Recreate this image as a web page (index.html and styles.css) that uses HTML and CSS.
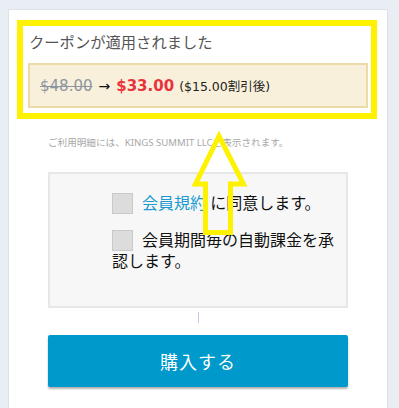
FILE: index.html
```html
<!DOCTYPE html>
<html lang="ja">
<head>
<meta charset="utf-8">
<link rel="stylesheet" href="styles.css">
</head>
<body>
<div class="card">
  <section class="coupon">
    <h2 class="coupon-title">クーポンが適用されました</h2>
    <div class="price-box">
      <span class="old">$48.00</span>
      <span class="arrow">→</span>
      <span class="new">$33.00</span>
      <span class="note">($15.00割引後)</span>
    </div>
  </section>
  <div class="content">
    <p class="statement">ご利用明細には、KINGS SUMMIT LLCと表示されます。</p>
    <div class="agree-box">
      <div class="agree-inner">
        <p class="agree-row"><span class="check"></span><a class="link">会員規約</a> に同意します。</p>
        <p class="agree-row"><span class="check"></span>会員期間毎の自動課金を承認します。</p>
      </div>
    </div>
    <div class="caret-row"><span class="caret"></span></div>
    <button class="buy">購入する</button>
  </div>
</div>
<svg class="annot-arrow" width="399" height="408" viewBox="0 0 399 408">
  <polygon points="219,136 195.5,184 205.5,184 205.5,232.5 230.5,232.5 230.5,184 243.5,184" fill="none" stroke="#fff200" stroke-width="5" stroke-linejoin="miter" stroke-miterlimit="10"/>
</svg>
</body>
</html>
```

FILE: styles.css
```css
html, body {
  margin: 0;
  padding: 0;
}
body {
  background: #e9edf4;
  padding: 9px 0 0 8px;
  height: 408px;
  box-sizing: border-box;
  overflow: hidden;
  font-family: "Noto Sans", "Noto Sans CJK JP", sans-serif;
  position: relative;
}
.card {
  width: 380px;
  height: 399px;
  box-sizing: border-box;
  background: #fff;
  border: 1px solid #dde1e8;
  border-bottom: none;
  padding: 10px 0 0 8px;
}
.coupon {
  width: 360px;
  box-sizing: border-box;
  border: 6px solid #fff200;
  padding: 6px 3px 5px 5px;
}
.coupon-title {
  margin: 0 0 10px 0;
  padding-left: 1px;
  font-size: 15.3px;
  font-weight: normal;
  line-height: 21px;
  color: #555;
}
.price-box {
  height: 45px;
  box-sizing: border-box;
  background: #f8f0db;
  border: 2px solid #ecdba6;
  padding: 0 10px;
  display: flex;
  align-items: center;
  white-space: nowrap;
  font-family: "DejaVu Sans", "Noto Sans CJK JP", sans-serif;
}
.old {
  font-size: 15px;
  color: #8d95a0;
  text-decoration: line-through;
}
.arrow {
  font-size: 14px;
  color: #111;
  margin: 0 6px;
}
.new {
  font-size: 15px;
  font-weight: bold;
  color: #e8333b;
  margin-right: 5px;
}
.note {
  font-size: 12.5px;
  color: #222;
}
.content {
  width: 300px;
  margin-left: 31px;
}
.statement {
  margin: 17px 0 0 0;
  font-size: 9.6px;
  line-height: 14px;
  color: #a8a8a8;
  white-space: nowrap;
}
.agree-box {
  margin-top: 22px;
  height: 136px;
  box-sizing: border-box;
  background: #f7f7f7;
  border: 2px solid #e7e7e7;
  padding: 19px 0 0 62px;
}
.agree-inner {
  width: 228px;
}
.agree-row {
  margin: 0 0 16px 0;
  font-size: 16px;
  line-height: 21px;
  color: #111;
}
.check {
  display: inline-block;
  width: 19px;
  height: 19px;
  background: #dcdcdc;
  border: 1px solid #c9c9c9;
  vertical-align: -5px;
  margin-right: 9px;
}
.link {
  color: #1a9ad0;
}
.caret-row {
  height: 27px;
  display: flex;
  justify-content: center;
  padding-top: 4px;
  box-sizing: border-box;
}
.caret {
  width: 1px;
  height: 11px;
  background: #c5c5f0;
}
.buy {
  display: block;
  width: 300px;
  height: 52px;
  border: none;
  border-radius: 2px;
  background: #0099cb;
  color: #fff;
  font-family: "Noto Sans CJK JP", sans-serif;
  font-size: 18px;
  letter-spacing: 1px;
  box-shadow: 0 2px 2px rgba(0, 0, 0, 0.3);
  padding: 0;
}
.annot-arrow {
  position: absolute;
  left: 0;
  top: 0;
  pointer-events: none;
}
```
